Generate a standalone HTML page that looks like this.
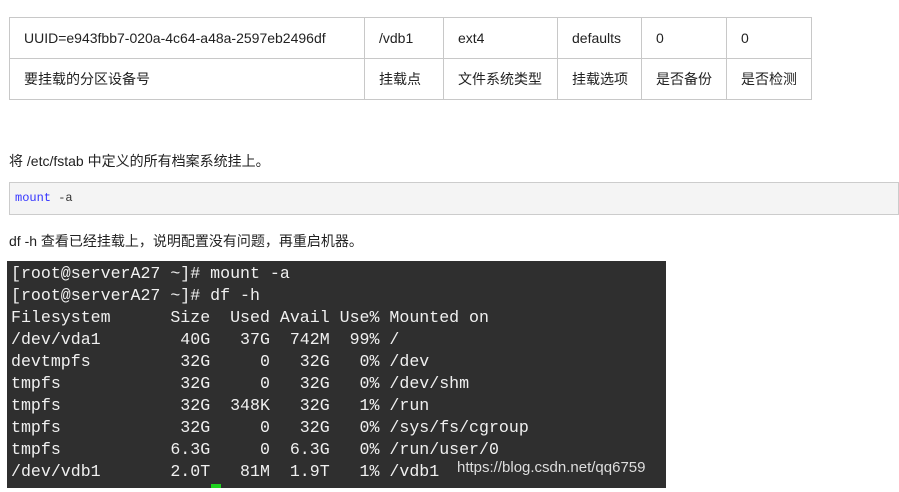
<!DOCTYPE html>
<html><head><meta charset="utf-8"><style>
body{margin:0;width:899px;height:492px;background:#fff;position:relative;overflow:hidden;font-family:"Liberation Sans","Noto Sans CJK SC",sans-serif;color:#333;}
table{position:absolute;left:9px;top:17px;border-collapse:collapse;font-size:14px;color:#222}
td{border:1px solid #c8c8c8;height:41px;padding:0 0 0 14px;box-sizing:border-box}
.p{position:absolute;left:9px;font-size:14px;color:#222}
.code{position:absolute;left:9px;top:182px;width:890px;height:33px;background:#f4f4f4;border:1px solid #ccc;box-sizing:border-box;font-family:"Liberation Mono",monospace;font-size:12px;line-height:31px;padding-left:5px;color:#333}
.term{position:absolute;left:7px;top:261px;width:659px;height:227px;background:#2f2f2f;color:#f0f0f0;font-family:"Liberation Mono",monospace;font-size:16.6px;line-height:22px;white-space:pre;padding:2px 0 0 4px;box-sizing:border-box}
.cur{position:absolute;left:211px;top:484px;width:10px;height:4px;background:#1ed21e}
.wm{position:absolute;left:457px;top:459px;font-size:15px;color:#ddd;font-family:"Liberation Sans",sans-serif}
</style></head><body>
<table><tr><td style="width:355px">UUID=e943fbb7-020a-4c64-a48a-2597eb2496df</td><td style="width:79px">/vdb1</td><td style="width:114px">ext4</td><td style="width:84px">defaults</td><td style="width:85px">0</td><td style="width:85px">0</td></tr>
<tr><td>要挂载的分区设备号</td><td>挂载点</td><td>文件系统类型</td><td>挂载选项</td><td>是否备份</td><td>是否检测</td></tr></table>
<div class="p" style="top:151px">将 /etc/fstab 中定义的所有档案系统挂上。</div>
<div class="code"><span style="color:#33f">mount</span> -a</div>
<div class="p" style="top:231px">df -h 查看已经挂载上，说明配置没有问题，再重启机器。</div>
<div class="term">[root@serverA27 ~]# mount -a
[root@serverA27 ~]# df -h
Filesystem      Size  Used Avail Use% Mounted on
/dev/vda1        40G   37G  742M  99% /
devtmpfs         32G     0   32G   0% /dev
tmpfs            32G     0   32G   0% /dev/shm
tmpfs            32G  348K   32G   1% /run
tmpfs            32G     0   32G   0% /sys/fs/cgroup
tmpfs           6.3G     0  6.3G   0% /run/user/0
/dev/vdb1       2.0T   81M  1.9T   1% /vdb1</div>
<div class="cur"></div>
<div class="wm">https://blog.csdn.net/qq6759</div>
</body></html>
